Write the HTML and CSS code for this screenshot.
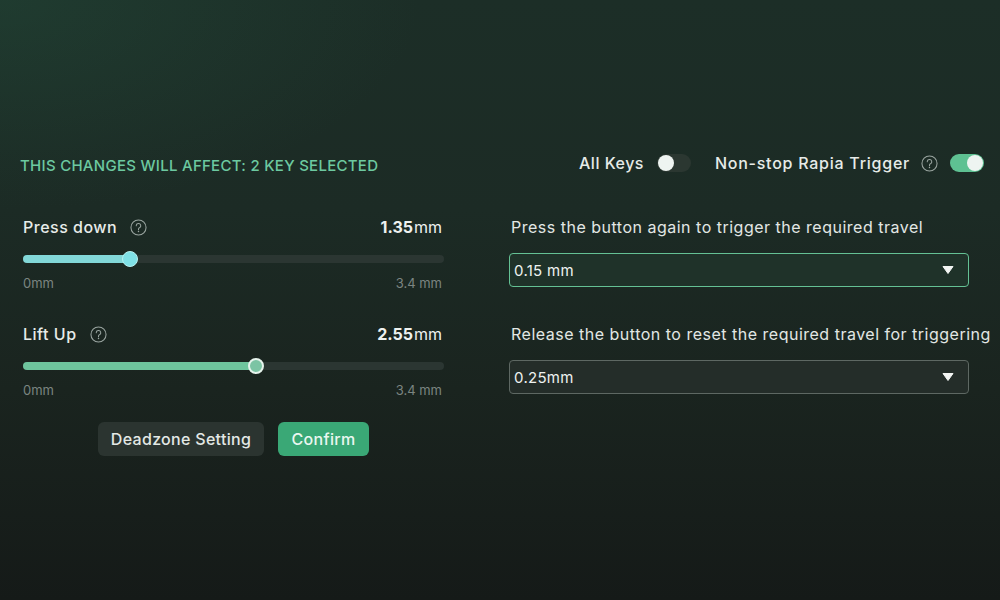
FILE: index.html
```html
<!DOCTYPE html>
<html lang="en">
<head>
<meta charset="utf-8">
<title>Rapid Trigger</title>
<link rel="stylesheet" href="styles.css">
</head>
<body>
<div class="page">
  <div class="topbar">
    <div class="affect">THIS CHANGES WILL AFFECT: 2 KEY SELECTED</div>
    <div class="switches">
      <span class="sw-label">All Keys</span>
      <span class="toggle"><span class="knob"></span></span>
      <span class="sw-label sw-gap">Non-stop Rapia Trigger</span>
      <svg class="help" viewBox="0 0 18 18"><circle cx="9" cy="9" r="8" fill="none" stroke="currentColor" stroke-width="1.1"/><path d="M6.6 7.1a2.4 2.4 0 1 1 3.4 2.2c-.7.3-1 .8-1 1.5v.6" fill="none" stroke="currentColor" stroke-width="1.1" stroke-linecap="round"/><circle cx="9" cy="13.3" r=".8" fill="currentColor"/></svg>
      <span class="toggle on"><span class="knob"></span></span>
    </div>
  </div>

  <div class="main">
    <div class="left">
      <div class="field">
        <div class="field-head">
          <span class="label">Press down</span>
          <svg class="help" viewBox="0 0 18 18"><circle cx="9" cy="9" r="8" fill="none" stroke="currentColor" stroke-width="1.1"/><path d="M6.6 7.1a2.4 2.4 0 1 1 3.4 2.2c-.7.3-1 .8-1 1.5v.6" fill="none" stroke="currentColor" stroke-width="1.1" stroke-linecap="round"/><circle cx="9" cy="13.3" r=".8" fill="currentColor"/></svg>
          <span class="value"><b>1.35</b>mm</span>
        </div>
        <div class="slider press">
          <div class="fill" style="width: 25.4%"><span class="thumb"></span></div>
        </div>
        <div class="range"><span>0mm</span><span>3.4 mm</span></div>
      </div>

      <div class="field second">
        <div class="field-head">
          <span class="label">Lift Up</span>
          <svg class="help" viewBox="0 0 18 18"><circle cx="9" cy="9" r="8" fill="none" stroke="currentColor" stroke-width="1.1"/><path d="M6.6 7.1a2.4 2.4 0 1 1 3.4 2.2c-.7.3-1 .8-1 1.5v.6" fill="none" stroke="currentColor" stroke-width="1.1" stroke-linecap="round"/><circle cx="9" cy="13.3" r=".8" fill="currentColor"/></svg>
          <span class="value"><b>2.55</b>mm</span>
        </div>
        <div class="slider lift">
          <div class="fill" style="width: 55.3%"><span class="thumb"></span></div>
        </div>
        <div class="range"><span>0mm</span><span>3.4 mm</span></div>
      </div>

      <div class="actions">
        <button class="btn ghost">Deadzone Setting</button>
        <button class="btn primary">Confirm</button>
      </div>
    </div>

    <div class="right">
      <div class="desc">Press the button again to trigger the required travel</div>
      <div class="select active">
        <span>0.15 mm</span>
        <svg class="caret" viewBox="0 0 12 10"><path d="M1 1.5h10L6 8.5z" fill="currentColor" stroke="currentColor" stroke-width="1" stroke-linejoin="round"/></svg>
      </div>
      <div class="desc second">Release the button to reset the required travel for triggering</div>
      <div class="select">
        <span>0.25mm</span>
        <svg class="caret" viewBox="0 0 12 10"><path d="M1 1.5h10L6 8.5z" fill="currentColor" stroke="currentColor" stroke-width="1" stroke-linejoin="round"/></svg>
      </div>
    </div>
  </div>
</div>
</body>
</html>
```

FILE: styles.css
```css
* { box-sizing: border-box; }

html, body {
  margin: 0;
  height: 100%;
}

body {
  width: 1000px;
  height: 600px;
  overflow: hidden;
  font-family: Inter, "Noto Sans", "Liberation Sans", sans-serif;
  color: #e4e9e6;
  background:
    radial-gradient(ellipse 600px 300px at 0% 0%, rgba(38, 84, 64, 0.35), rgba(38, 84, 64, 0) 70%),
    linear-gradient(180deg, #1c2e27 0%, #1c2b25 35%, #1a241f 65%, #151a18 100%);
}

.page {
  padding: 152px 16px 0 20px;
}

/* top row: affected keys + switches */
.topbar {
  display: flex;
  justify-content: space-between;
  align-items: center;
  height: 22px;
}

.affect {
  font-size: 15px;
  font-weight: 500;
  color: #6cc9a0;
  letter-spacing: 0.28px;
  margin-top: 5px;
}

.switches {
  display: flex;
  align-items: center;
}

.sw-label {
  font-size: 16px;
  font-weight: 500;
  color: #e6ebe8;
  letter-spacing: 0.5px;
}

.sw-gap {
  margin-left: 24px;
  letter-spacing: 0.75px;
}

.toggle {
  display: flex;
  align-items: center;
  width: 34px;
  height: 18px;
  border-radius: 9px;
  background: #2b3731;
  margin-left: 13px;
  padding: 1px;
}

.toggle .knob {
  width: 16px;
  height: 16px;
  border-radius: 50%;
  background: #eef4f1;
}

.toggle.on {
  background: #5ec192;
  justify-content: flex-end;
  margin-left: 12px;
}

.help {
  width: 17px;
  height: 17px;
  color: #9aa5a0;
  flex: none;
}

.switches .help { margin-left: 11px; }

/* two columns */
.main {
  display: flex;
  margin-top: 43px;
}

.left {
  width: 421px;
  margin-left: 3px;
}

.field-head {
  display: flex;
  align-items: center;
  height: 20px;
}

.label {
  font-size: 16px;
  font-weight: 500;
  color: #e8ece9;
  letter-spacing: 0.5px;
}

.field-head .help { margin-left: 13px; }

.value {
  margin-left: auto;
  margin-right: 2px;
  font-size: 16px;
  color: #eef1ef;
}

.value b { font-weight: 700; margin-right: 1px; }

.slider {
  position: relative;
  height: 8px;
  margin-top: 18px;
  border-radius: 4px;
  background: #2b3632;
}

.slider .fill {
  position: relative;
  height: 100%;
  border-radius: 4px;
}

.slider .thumb {
  position: absolute;
  right: -8px;
  top: -4px;
  width: 16px;
  height: 16px;
  border-radius: 50%;
}

.slider.press .fill { background: #82d8d8; }
.slider.press .thumb {
  background: #7fe1e6;
  border: 1.5px solid #b6f0f0;
}

.slider.lift .fill { background: #6ec59d; }
.slider.lift .thumb {
  background: #7cc4a4;
  border: 2px solid #e6f3ec;
}

.range {
  display: flex;
  justify-content: space-between;
  margin-top: 12px;
  font-size: 13px;
  color: #7b8581;
  padding-right: 2px;
}

.field.second { margin-top: 33px; }

.actions {
  display: flex;
  justify-content: center;
  gap: 14px;
  margin-top: 24px;
}

.btn {
  height: 34px;
  border: none;
  border-radius: 6px;
  font-family: inherit;
  font-size: 16px;
  font-weight: 500;
  letter-spacing: 0.3px;
  padding: 0 10px;
}

.btn.ghost {
  background: #2b3430;
  color: #e3e8e5;
  width: 166px;
}

.btn.primary {
  background: #3aa876;
  color: #eaf7f0;
  width: 91px;
}

.right {
  width: 460px;
  margin-left: 65px;
}

.desc {
  height: 20px;
  line-height: 20px;
  font-size: 16px;
  color: #e2e7e4;
  margin-left: 2px;
  letter-spacing: 0.5px;
  white-space: nowrap;
}

.desc.second { margin-top: 37px; }

.select {
  display: flex;
  align-items: center;
  justify-content: space-between;
  height: 34px;
  margin-top: 16px;
  padding: 0 14px 0 4px;
  border: 1.5px solid #5e6863;
  border-radius: 4px;
  background: #242d29;
  font-size: 15px;
  color: #eef2f0;
  letter-spacing: 0.3px;
}

.select.active {
  border-color: #64c194;
  background: #1f3229;
}

.caret {
  width: 12px;
  height: 10px;
  color: #f2f5f3;
}
```
